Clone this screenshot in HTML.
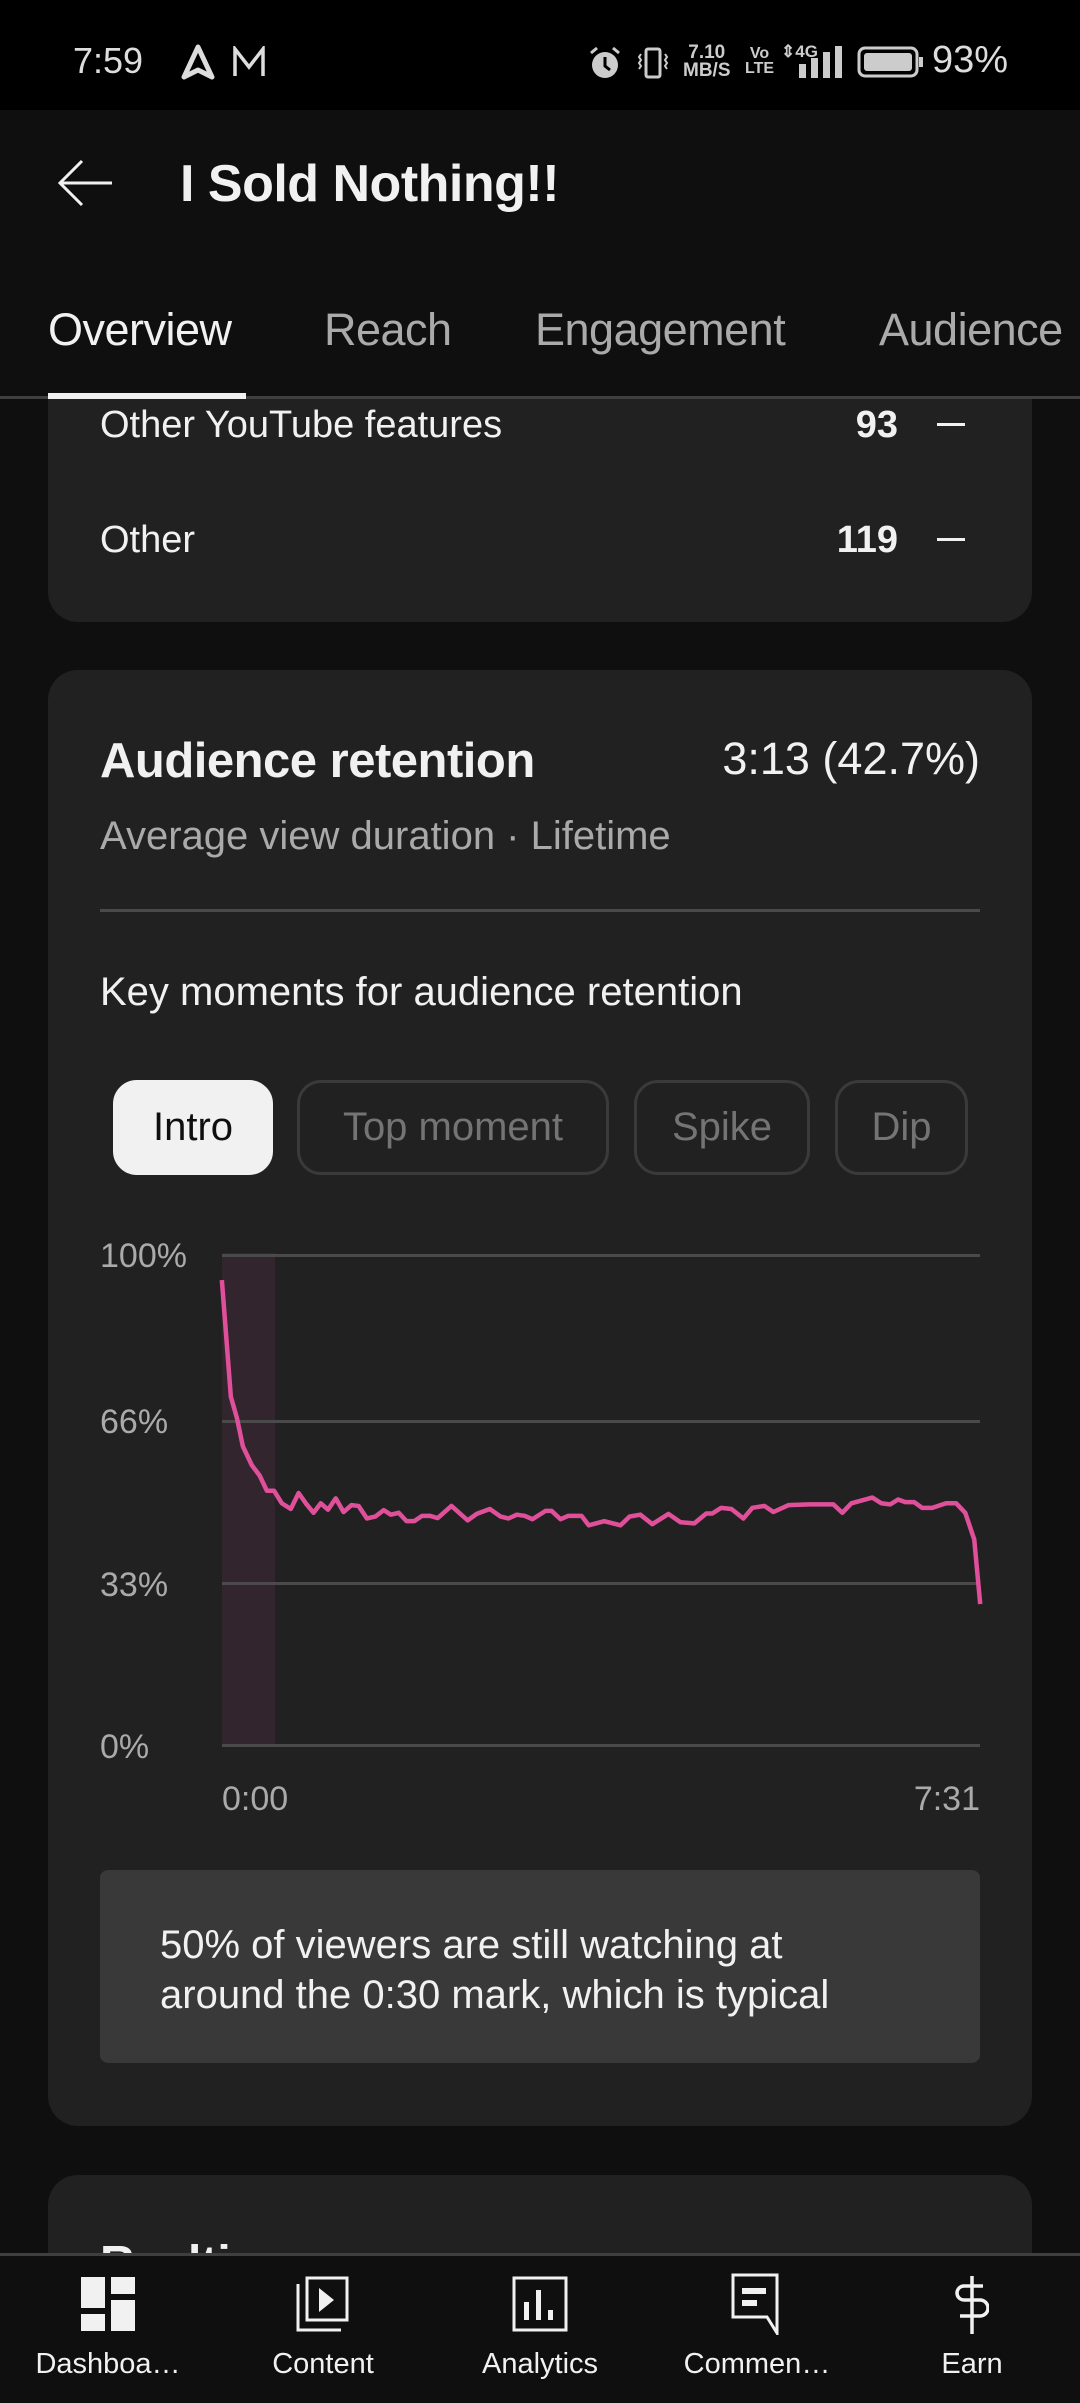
<!DOCTYPE html>
<html><head><meta charset="utf-8"><style>
*{margin:0;padding:0;box-sizing:border-box}
body{width:1080px;height:2400px;background:#0f0f0f;font-family:"Liberation Sans",sans-serif;color:#f1f1f1;position:relative;overflow:hidden}
.a{position:absolute;white-space:nowrap}
.card{position:absolute;left:48px;width:984px;background:#212121;border-radius:30px}
.chip{position:absolute;top:1080px;height:95px;border:3px solid #3a3a3a;border-radius:24px;color:#747474;font-size:40px;display:flex;align-items:center;justify-content:center}
.nl{position:absolute;top:2348px;font-size:29px;color:#f1f1f1;transform:translateX(-50%);z-index:6}
.ni{z-index:6}
</style></head><body>
<div class="a" style="left:0;top:0;width:1080px;height:110px;background:#000"></div>
<div class="a" style="left:73px;top:40px;font-size:36px;color:#ddd">7:59</div>
<svg class="a" style="left:180px;top:44px" width="36" height="36" viewBox="0 0 36 36"><path d="M18 3 L32 33 L18 26 L4 33 Z" fill="none" stroke="#ddd" stroke-width="5" stroke-linejoin="round"/></svg>
<svg class="a" style="left:232px;top:46px" width="34" height="32" viewBox="0 0 34 32"><path d="M3 30V3l14 18L31 3v27" fill="none" stroke="#ddd" stroke-width="3.5"/></svg>
<svg class="a" style="left:588px;top:46px" width="34" height="34" viewBox="0 0 34 34"><circle cx="17" cy="19" r="13" fill="#ccc"/><path d="M17 11v9l5 4" stroke="#000" stroke-width="3" fill="none"/><path d="M3 7l6-5M31 7l-6-5" stroke="#ccc" stroke-width="3"/></svg>
<svg class="a" style="left:636px;top:46px" width="34" height="34" viewBox="0 0 34 34"><rect x="10" y="3" width="14" height="28" rx="2" fill="none" stroke="#ccc" stroke-width="3"/><path d="M5 8l-2 3 2 3-2 3 2 3-2 3M29 8l2 3-2 3 2 3-2 3 2 3" stroke="#ccc" stroke-width="2" fill="none"/></svg>
<div class="a" style="left:683px;top:44px;font-size:19px;line-height:18px;color:#ccc;font-weight:bold;text-align:center">7.10<br>MB/S</div>
<div class="a" style="left:745px;top:46px;font-size:16px;line-height:15px;color:#ccc;font-weight:bold;text-align:center">Vo<br>LTE</div>
<div class="a" style="left:781px;top:42px;font-size:17px;color:#ccc;font-weight:bold">⇕4G</div>
<svg class="a" style="left:795px;top:46px" width="50" height="34" viewBox="0 0 50 34"><rect x="4" y="18" width="7" height="14" fill="#ccc"/><rect x="16" y="12" width="7" height="20" fill="#ccc"/><rect x="28" y="6" width="7" height="26" fill="#ccc"/><rect x="40" y="0" width="7" height="32" fill="#ccc"/></svg>
<svg class="a" style="left:857px;top:46px" width="68" height="32" viewBox="0 0 68 32"><rect x="2" y="2" width="58" height="28" rx="6" fill="none" stroke="#ccc" stroke-width="3"/><rect x="7" y="7" width="48" height="18" rx="3" fill="#ccc"/><rect x="62" y="11" width="4" height="10" fill="#ccc"/></svg>
<div class="a" style="left:932px;top:39px;font-size:38px;color:#ddd">93%</div>

<svg class="a" style="left:56px;top:158px" width="58" height="50" viewBox="0 0 58 50"><path d="M56 25H4M26 3L4 25l22 22" fill="none" stroke="#f1f1f1" stroke-width="3"/></svg>
<div class="a" style="left:180px;top:154px;font-size:52px;font-weight:bold;letter-spacing:-0.5px">I Sold Nothing!!</div>

<div class="a" style="left:48px;top:304px;font-size:45px;letter-spacing:-0.5px">Overview</div>
<div class="a" style="left:324px;top:304px;font-size:45px;color:#aaa;letter-spacing:-0.5px">Reach</div>
<div class="a" style="left:535px;top:304px;font-size:45px;color:#aaa;letter-spacing:-0.5px">Engagement</div>
<div class="a" style="left:879px;top:304px;font-size:45px;color:#aaa;letter-spacing:-0.5px">Audience</div>

<div class="card" style="top:399px;height:223px;border-radius:0 0 30px 30px"></div>
<div class="a" style="left:0;top:396px;width:1080px;height:3px;background:#3f3f3f"></div>
<div class="a" style="left:48px;top:393px;width:198px;height:6px;background:#f1f1f1"></div>
<div class="a" style="left:100px;top:404px;font-size:38px">Other YouTube features</div>
<div class="a" style="left:800px;top:404px;width:98px;text-align:right;font-size:38px;font-weight:bold">93</div>
<div class="a" style="left:937px;top:423px;width:28px;height:3px;background:#f1f1f1"></div>
<div class="a" style="left:100px;top:519px;font-size:38px">Other</div>
<div class="a" style="left:800px;top:519px;width:98px;text-align:right;font-size:38px;font-weight:bold">119</div>
<div class="a" style="left:937px;top:538px;width:28px;height:3px;background:#f1f1f1"></div>

<div class="card" style="top:670px;height:1456px"></div>
<div class="a" style="left:100px;top:733px;font-size:49px;font-weight:bold;letter-spacing:-0.5px">Audience retention</div>
<div class="a" style="left:680px;top:733px;width:300px;text-align:right;font-size:45px">3:13 (42.7%)</div>
<div class="a" style="left:100px;top:814px;font-size:40px;color:#aaa">Average view duration · Lifetime</div>
<div class="a" style="left:100px;top:909px;width:880px;height:3px;background:#4a4a4a"></div>
<div class="a" style="left:100px;top:970px;font-size:40px">Key moments for audience retention</div>
<div class="chip" style="left:113px;width:160px;background:#f1f1f1;border-color:#f1f1f1;color:#0f0f0f">Intro</div>
<div class="chip" style="left:297px;width:312px">Top moment</div>
<div class="chip" style="left:634px;width:176px">Spike</div>
<div class="chip" style="left:835px;width:133px">Dip</div>

<div class="a" style="left:222px;top:1253px;width:53px;height:494px;background:#33252d"></div>
<div class="a" style="left:222px;top:1254px;width:758px;height:3px;background:#4a4a4a"></div>
<div class="a" style="left:222px;top:1420px;width:758px;height:3px;background:#4a4a4a"></div>
<div class="a" style="left:222px;top:1582px;width:758px;height:3px;background:#4a4a4a"></div>
<div class="a" style="left:222px;top:1744px;width:758px;height:3px;background:#4a4a4a"></div>
<div class="a" style="left:100px;top:1237px;font-size:34px;color:#aaa">100%</div>
<div class="a" style="left:100px;top:1403px;font-size:34px;color:#aaa">66%</div>
<div class="a" style="left:100px;top:1566px;font-size:34px;color:#aaa">33%</div>
<div class="a" style="left:100px;top:1728px;font-size:34px;color:#aaa">0%</div>
<div class="a" style="left:222px;top:1780px;font-size:34px;color:#aaa">0:00</div>
<div class="a" style="left:880px;top:1780px;width:100px;text-align:right;font-size:34px;color:#aaa">7:31</div>
<svg class="a" style="left:60px;top:1220px" width="940" height="600" viewBox="0 0 1568 1578" preserveAspectRatio="none"><path vector-effect="non-scaling-stroke" fill="none" stroke="#e0509a" stroke-width="4.5" stroke-linejoin="round" d="M270,158 L285,465 L295,520 L305,595 L320,645 L333,672 L345,712 L357,712 L370,745 L385,760 L398,718 L410,745 L423,770 L435,745 L447,762 L460,732 L473,768 L486,750 L498,752 L512,785 L526,780 L540,763 L552,775 L565,770 L578,792 L591,792 L604,778 L617,778 L630,784 L653,752 L680,790 L695,773 L717,760 L735,780 L748,785 L762,775 L775,778 L788,787 L810,765 L820,765 L835,787 L848,778 L870,778 L882,803 L908,792 L935,803 L950,780 L968,775 L988,800 L1015,773 L1035,795 L1058,798 L1078,772 L1088,772 L1103,757 L1120,760 L1140,785 L1155,757 L1175,752 L1190,768 L1215,750 L1250,748 L1290,748 L1305,770 L1320,745 L1355,730 L1370,745 L1385,748 L1398,735 L1410,742 L1425,742 L1438,757 L1455,757 L1478,745 L1495,745 L1510,770 L1525,840 L1535,1010"/></svg>

<div class="a" style="left:100px;top:1870px;width:880px;height:193px;background:#393939;border-radius:8px"></div>
<div class="a" style="left:160px;top:1920px;font-size:40px;line-height:50px">50% of viewers are still watching at<br>around the 0:30 mark, which is typical</div>

<div class="card" style="top:2175px;height:200px"></div>
<div class="a" style="left:100px;top:2236px;font-size:48px;font-weight:bold">Realtime</div>

<div class="a" style="left:0;top:2253px;width:1080px;height:150px;background:#0f0f0f;border-top:3px solid #3f3f3f;z-index:5"></div>
<svg class="a ni" style="left:80px;top:2276px" width="56" height="56" viewBox="0 0 56 56"><rect x="1" y="1" width="24" height="31" fill="#f1f1f1"/><rect x="1" y="38" width="24" height="17" fill="#f1f1f1"/><rect x="31" y="1" width="24" height="17" fill="#f1f1f1"/><rect x="31" y="24" width="24" height="31" fill="#f1f1f1"/></svg>
<svg class="a ni" style="left:295px;top:2276px" width="58" height="58" viewBox="0 0 58 58"><rect x="12" y="2" width="40" height="42" fill="none" stroke="#f1f1f1" stroke-width="3"/><path d="M3 8V54H46" fill="none" stroke="#f1f1f1" stroke-width="3"/><path d="M24 12v24l15-12z" fill="#f1f1f1"/></svg>
<svg class="a ni" style="left:512px;top:2276px" width="56" height="56" viewBox="0 0 56 56"><rect x="2" y="2" width="52" height="52" fill="none" stroke="#f1f1f1" stroke-width="3"/><rect x="12" y="26" width="5" height="18" fill="#f1f1f1"/><rect x="24" y="14" width="5" height="30" fill="#f1f1f1"/><rect x="36" y="34" width="5" height="10" fill="#f1f1f1"/></svg>
<svg class="a ni" style="left:730px;top:2273px" width="52" height="62" viewBox="0 0 52 62"><path d="M3 2H47V60L37 44H3Z" fill="none" stroke="#f1f1f1" stroke-width="3"/><rect x="12" y="15" width="24" height="6" fill="#f1f1f1"/><rect x="12" y="27" width="15" height="6" fill="#f1f1f1"/></svg>
<svg class="a ni" style="left:955px;top:2276px" width="34" height="58" viewBox="0 0 34 58"><path d="M17 0v58M28 10H9a7 7 0 0 0 0 14h16a8 8 0 0 1 0 16H5" fill="none" stroke="#f1f1f1" stroke-width="3.5"/></svg>
<div class="nl" style="left:108px">Dashboa…</div>
<div class="nl" style="left:323px">Content</div>
<div class="nl" style="left:540px">Analytics</div>
<div class="nl" style="left:757px">Commen…</div>
<div class="nl" style="left:972px">Earn</div>
</body></html>
